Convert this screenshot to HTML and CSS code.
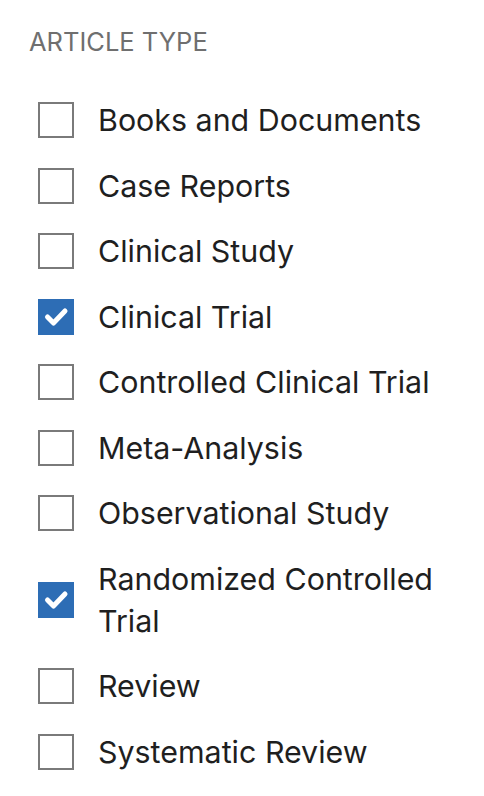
FILE: index.html
```html
<!DOCTYPE html>
<html>
<head>
  <title>Article type filter</title>
  <meta charset="UTF-8">
  <link rel="stylesheet" href="styles.css">
</head>
<body>

<div class="filter-box">
  <h3 class="filter-title">ARTICLE TYPE</h3>
  <ul class="filter-list">
    <li class="filter-item"><span class="check"></span><span class="label">Books and Documents</span></li>
    <li class="filter-item"><span class="check"></span><span class="label">Case Reports</span></li>
    <li class="filter-item"><span class="check"></span><span class="label">Clinical Study</span></li>
    <li class="filter-item"><span class="check checked"><svg viewBox="0 0 36 36"><path d="M9.5 18 L15.5 24 L27 12"/></svg></span><span class="label">Clinical Trial</span></li>
    <li class="filter-item"><span class="check"></span><span class="label">Controlled Clinical Trial</span></li>
    <li class="filter-item"><span class="check"></span><span class="label">Meta-Analysis</span></li>
    <li class="filter-item"><span class="check"></span><span class="label">Observational Study</span></li>
    <li class="filter-item"><span class="check checked"><svg viewBox="0 0 36 36"><path d="M9.5 18 L15.5 24 L27 12"/></svg></span><span class="label">Randomized Controlled Trial</span></li>
    <li class="filter-item"><span class="check"></span><span class="label">Review</span></li>
    <li class="filter-item"><span class="check"></span><span class="label">Systematic Review</span></li>
  </ul>
</div>

</body>
</html>
```

FILE: styles.css
```css
body {
  margin: 0;
  background-color: white;
  font-family: Inter, "Liberation Sans", Arial, sans-serif;
}

.filter-box {
  padding: 26px 24px 0 29px;
}

.filter-title {
  margin: 0 0 41px 0;
  font-size: 25.5px;
  line-height: 32px;
  font-weight: normal;
  color: #6f6f6f;
}

.filter-list {
  list-style: none;
  margin: 0;
  padding: 0 0 0 9px;
  display: flex;
  flex-direction: column;
  gap: 23.5px;
}

.filter-item {
  display: flex;
  align-items: center;
  gap: 24px;
}

.check {
  flex: none;
  width: 36px;
  height: 36px;
  box-sizing: border-box;
  border: 2px solid #7a7a7a;
}

.check.checked {
  border: none;
  background-color: #2d6db5;
}

.check svg {
  display: block;
  width: 36px;
  height: 36px;
}

.check path {
  fill: none;
  stroke: white;
  stroke-width: 5;
  stroke-linecap: round;
  stroke-linejoin: round;
}

.label {
  font-size: 30.4px;
  line-height: 42px;
  color: #1f1f1f;
  max-width: 360px;
}
```
